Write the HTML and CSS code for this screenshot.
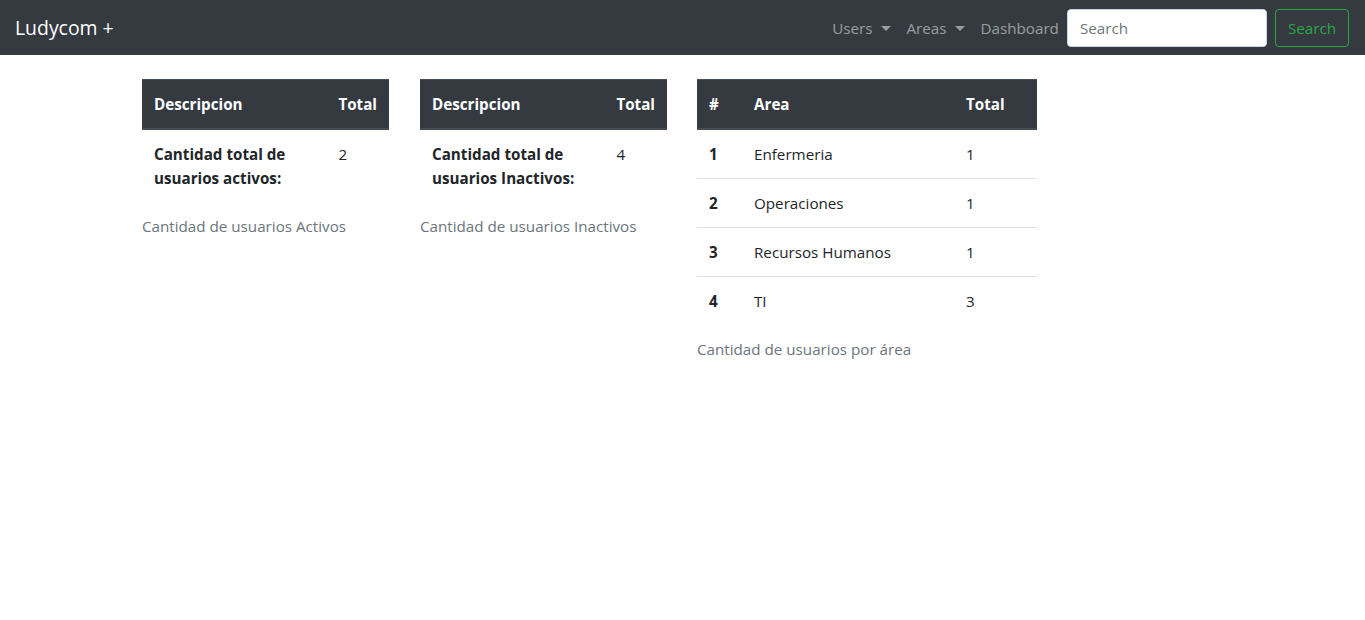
FILE: index.html
```html
<!DOCTYPE html>
<html lang="es">
<head>
<meta charset="utf-8">
<title>Ludycom +</title>
<link rel="stylesheet" href="styles.css">
</head>
<body>
<nav class="navbar">
  <a class="brand" href="#">Ludycom +</a>
  <div class="nav-right">
    <ul class="nav">
      <li><a class="nav-link dropdown" href="#">Users</a></li>
      <li><a class="nav-link dropdown" href="#">Areas</a></li>
      <li><a class="nav-link" href="#">Dashboard</a></li>
    </ul>
    <form class="search">
      <input class="search-input" type="search" placeholder="Search">
      <button class="btn-outline" type="button">Search</button>
    </form>
  </div>
</nav>
<main class="content">
  <table class="table t-small t-first">
    <caption>Cantidad de usuarios Activos</caption>
    <thead>
      <tr><th class="c-desc">Descripcion</th><th>Total</th></tr>
    </thead>
    <tbody>
      <tr><th class="c-desc">Cantidad total de usuarios activos:</th><td>2</td></tr>
    </tbody>
  </table>
  <table class="table t-small">
    <caption>Cantidad de usuarios Inactivos</caption>
    <thead>
      <tr><th class="c-desc">Descripcion</th><th>Total</th></tr>
    </thead>
    <tbody>
      <tr><th class="c-desc">Cantidad total de usuarios Inactivos:</th><td>4</td></tr>
    </tbody>
  </table>
  <table class="table t-area">
    <caption>Cantidad de usuarios por área</caption>
    <thead>
      <tr><th class="c-num">#</th><th class="c-area">Area</th><th>Total</th></tr>
    </thead>
    <tbody>
      <tr><th>1</th><td>Enfermeria</td><td>1</td></tr>
      <tr><th>2</th><td>Operaciones</td><td>1</td></tr>
      <tr><th>3</th><td>Recursos Humanos</td><td>1</td></tr>
      <tr><th>4</th><td>TI</td><td>3</td></tr>
    </tbody>
  </table>
</main>
</body>
</html>
```

FILE: styles.css
```css
* { box-sizing: border-box; }
html, body { margin: 0; padding: 0; }
body {
  font-family: "Open Sans", "Noto Sans", "Liberation Sans", sans-serif;
  font-size: 15.2px;
  line-height: 24px;
  color: #212529;
  background: #fff;
}
a { text-decoration: none; }

.navbar {
  height: 55px;
  background: #343a40;
  display: flex;
  align-items: center;
  justify-content: space-between;
  padding: 0 16px 0 15px;
}
.brand {
  color: #fff;
  font-size: 19.4px;
  line-height: 30px;
}
.nav-right { display: flex; align-items: center; }
.nav {
  list-style: none;
  margin: 0;
  padding: 0;
  display: flex;
}
.nav-link {
  display: block;
  padding: 8px;
  color: rgba(255, 255, 255, 0.5);
}
.dropdown::after {
  content: "";
  display: inline-block;
  margin-left: 8px;
  vertical-align: 3px;
  border-top: 5px solid;
  border-right: 5px solid transparent;
  border-left: 5px solid transparent;
}
.search { display: flex; align-items: center; margin: 0; }
.search-input {
  width: 200px;
  height: 38px;
  padding: 6px 12px;
  font: inherit;
  color: #495057;
  background: #fff;
  border: 1px solid #ced4da;
  border-radius: 4px;
  margin-right: 8px;
}
.search-input::placeholder { color: #6c757d; }
.btn-outline {
  height: 38px;
  padding: 6px 12px;
  font: inherit;
  color: #28a745;
  background: transparent;
  border: 1px solid #28a745;
  border-radius: 4px;
}

.content {
  display: flex;
  align-items: flex-start;
  gap: 30px;
  padding: 24px 0 0 142px;
}
.t-first { margin-right: 1px; }
.table {
  border-collapse: collapse;
  caption-side: bottom;
}
.table caption {
  text-align: left;
  color: #6c757d;
  padding: 12px 0;
}
.table th, .table td {
  padding: 12px;
  text-align: left;
  vertical-align: top;
  border-top: 1px solid #dee2e6;
}
.table thead th {
  background: #343a40;
  color: #fff;
  font-weight: 700;
  border-top: 1px solid #454d55;
  border-bottom: 2px solid #454d55;
  vertical-align: bottom;
}
.table tbody th { font-weight: 700; }
.t-small { width: 247px; }
.t-small .c-desc { width: 185px; }
.t-area { width: 340px; }
.t-area .c-num { width: 45px; }
.t-area .c-area { width: 212px; }
```
